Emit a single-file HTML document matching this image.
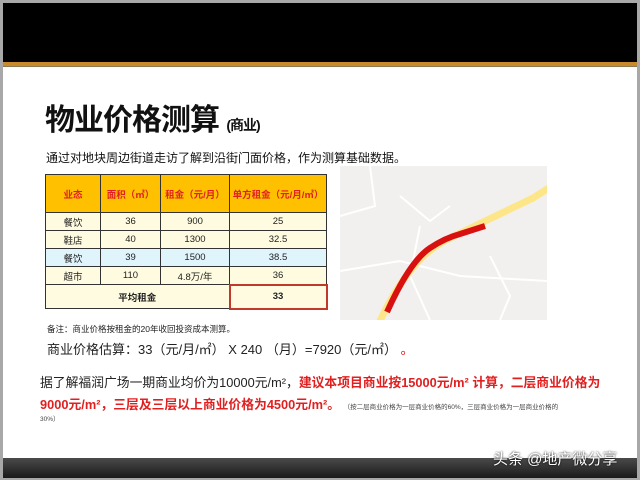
<!DOCTYPE html>
<html><head><meta charset="utf-8"><style>
*{margin:0;padding:0;box-sizing:border-box}
body{width:640px;height:480px;background:#a8a8a8;position:relative;overflow:hidden;font-family:"Liberation Sans","Noto Sans CJK SC",sans-serif}
.pg{position:absolute;left:3px;top:3px;width:634px;height:475px;background:#fff;overflow:hidden}
.top{position:absolute;left:0;top:0;width:634px;height:59px;background:#000}
.or{position:absolute;left:0;top:59px;width:634px;height:5px;background:#c98a2e;border-bottom:1px solid #8a7a50}
.bot{position:absolute;left:0;top:455px;width:634px;height:20px;background:linear-gradient(#4a4a4a,#1a1a1a)}
.a{position:absolute;white-space:nowrap}
table{position:absolute;left:42px;top:171px;border-collapse:collapse;font-size:9.5px;text-align:center}
td{border:1px solid #333;height:18px;background:#fffbe0;color:#222}
tr.h td{background:#ffc000;color:#e02020;height:38px;font-weight:bold}
tr.b td{background:#e0f4fc}
.map{position:absolute;left:337px;top:163px;width:207px;height:154px;background:#f1f0ee;overflow:hidden}
</style></head><body><div class="pg">
<div class="top"></div><div class="or"></div>
<div class="a" style="left:42px;top:92px;font-size:30px;font-weight:bold;color:#111;letter-spacing:-1px">物业价格测算 <span style="font-size:14px">(商业)</span></div>
<div class="a" style="left:43px;top:146px;font-size:12px;color:#111">通过对地块周边街道走访了解到沿街门面价格，作为测算基础数据。</div>
<table>
<tr class="h"><td style="width:55px">业态</td><td style="width:60px">面积（㎡）</td><td style="width:69px">租金（元/月）</td><td style="width:97px">单方租金（元/月/㎡）</td></tr>
<tr><td>餐饮</td><td>36</td><td>900</td><td>25</td></tr>
<tr><td>鞋店</td><td>40</td><td>1300</td><td>32.5</td></tr>
<tr class="b"><td>餐饮</td><td>39</td><td>1500</td><td>38.5</td></tr>
<tr><td>超市</td><td>110</td><td>4.8万/年</td><td>36</td></tr>
<tr><td colspan="3" style="height:24px;font-weight:bold">平均租金</td><td style="border:2px solid #c0392b;font-weight:bold">33</td></tr>
</table>
<div class="map"><svg width="207" height="154">
<g stroke="#fff" stroke-width="2" fill="none"><path d="M30 0 L35 40 L0 50"/><path d="M0 105 L60 95 L120 110 L207 115"/><path d="M60 30 L90 55 L110 40"/><path d="M150 90 L170 130 L160 154"/><path d="M80 60 L70 110 L90 154"/></g>
<path d="M39 157 Q70 90 110 72 L193 32 L215 18" stroke="#fde68a" stroke-width="7" fill="none"/>
<path d="M47 146 Q70 95 90 82 Q105 72 120 68 L145 60" stroke="#d91010" stroke-width="6" fill="none"/>
</svg></div>
<div class="a" style="left:44px;top:320px;font-size:8.5px;color:#222">备注：商业价格按租金的20年收回投资成本测算。</div>
<div class="a" style="left:44px;top:336px;font-size:13px;color:#222">商业价格估算：33（元/月/㎡） X 240 （月）=7920（元/㎡） <span style="color:#d00">。</span></div>
<div class="a" style="left:37px;top:369px;font-size:12.8px;color:#222">据了解福润广场一期商业均价为10000元/m²，<b style="color:#e02020">建议本项目商业按15000元/m² 计算，二层商业价格为</b></div>
<div class="a" style="left:37px;top:391px;font-size:12.8px;color:#e02020;font-weight:bold">9000元/m²，三层及三层以上商业价格为4500元/m²。 <span style="font-size:6.5px;color:#444;font-weight:normal">（按二层商业价格为一层商业价格的60%，三层商业价格为一层商业价格的</span></div>
<div class="a" style="left:37px;top:410px;font-size:6.5px;color:#444">30%）</div>
<div class="bot"></div>
<div class="a" style="left:490px;top:445px;font-size:15px;color:#fff;text-shadow:0 0 2px #000">头条 @地产微分享</div>
</div></body></html>
